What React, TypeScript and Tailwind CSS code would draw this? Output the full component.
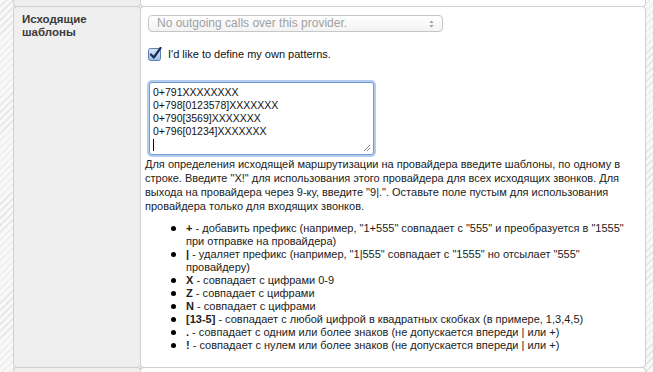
export default function App() {
  const items: { b: string; lines: string[] }[] = [
    { b: "+", lines: [' - добавить префикс (например, "1+555" совпадает с "555" и преобразуется в "1555"', "при отправке на провайдера)"] },
    { b: "|", lines: [' - удаляет префикс (например, "1|555" совпадает с "1555" но отсылает "555"', "провайдеру)"] },
    { b: "X", lines: [" - совпадает с цифрами 0-9"] },
    { b: "Z", lines: [" - совпадает с цифрами"] },
    { b: "N", lines: [" - совпадает с цифрами"] },
    { b: "[13-5]", lines: [" - совпадает с любой цифрой в квадратных скобках (в примере, 1,3,4,5)"] },
    { b: ".", lines: [" - совпадает с одним или более знаков (не допускается впереди | или +)"] },
    { b: "!", lines: [" - совпадает с нулем или более знаков (не допускается впереди | или +)"] },
  ];
  return (
    <div className="w-[653px] h-[372px] overflow-hidden bg-[repeating-linear-gradient(135deg,#f8f8f8_0px,#f8f8f8_4px,#e4e4e4_4px,#e4e4e4_5px)] pl-[13px] pr-[7px] text-[#222] font-['Liberation_Sans',Arial,sans-serif]">
      {/* previous row */}
      <div className="flex h-[7px]">
        <div className="w-[128px] shrink-0 bg-[#efefef] border-x border-b border-[#d0d0d0] rounded-b-[4px]" />
        <div className="flex-1 -ml-px bg-white border-x border-b border-[#d0d0d0] rounded-b-[4px]" />
      </div>
      {/* main row */}
      <div className="flex -mt-px h-[362px]">
        <div className="w-[128px] shrink-0 bg-[#efefef] border border-[#d0d0d0] rounded-[4px] pl-[8px] pt-[6px]">
          <div className="font-bold text-[11.5px] leading-[13px] text-[#3a3a3a]">
            Исходящие
            <br />
            шаблоны
          </div>
        </div>
        <div className="flex-1 -ml-px bg-white border border-[#d0d0d0] rounded-[4px] pl-[4px] pt-[8px]">
          {/* select */}
          <div className="relative ml-[3px] w-[295px] h-[17px] rounded-[4px] border border-[#c6c6c6] bg-[linear-gradient(#ffffff,#f3f3f3)] pl-[8px] text-[12px] leading-[15px] text-[#a0a0a0]">
            No outgoing calls over this provider.
            <svg className="absolute right-[8px] top-[4px]" width="5" height="8" viewBox="0 0 5 8">
              <path d="M0.5 3 L2.5 0.5 L4.5 3 Z" fill="#9a9a9a" />
              <path d="M0.5 5 L2.5 7.5 L4.5 5 Z" fill="#9a9a9a" />
            </svg>
          </div>
          {/* checkbox */}
          <div className="mt-[14px] ml-[3px] flex items-center h-[15px] gap-[6px]">
            <svg width="14" height="14" viewBox="0 0 14 14">
              <defs>
                <linearGradient id="cb" x1="0" y1="0" x2="0" y2="1">
                  <stop offset="0" stopColor="#dbe8f8" />
                  <stop offset="1" stopColor="#9fbfe6" />
                </linearGradient>
              </defs>
              <rect x="0.5" y="1.5" width="12" height="12" rx="2" fill="url(#cb)" stroke="#5d7fae" />
              <path d="M3 7.5 L5.8 10.5 L12.5 1" fill="none" stroke="#1c2c52" strokeWidth="2.2" strokeLinecap="round" strokeLinejoin="round" />
            </svg>
            <span className="text-[11px] leading-[14px] text-[#111]">I'd like to define my own patterns.</span>
          </div>
          {/* textarea */}
          <div className="relative mt-[21px] ml-[4px] w-[225px] h-[73px] rounded-[3px] border border-[#6f9ad4] shadow-[0_0_0_2px_#b3cbec] bg-white pl-[3px] pt-[3px] text-[10.5px] leading-[13px] text-[#111]">
            <div>0+791XXXXXXXX</div>
            <div>0+798[0123578]XXXXXXX</div>
            <div>0+790[3569]XXXXXXX</div>
            <div>0+796[01234]XXXXXXX</div>
            <div className="h-[13px] flex items-center">
              <span className="w-px h-[12px] bg-black" />
            </div>
            <svg className="absolute right-[2px] bottom-[2px]" width="8" height="8" viewBox="0 0 8 8">
              <path d="M7 1 L1 7 M7 4 L4 7" stroke="#888" strokeWidth="1" />
            </svg>
          </div>
          {/* paragraph */}
          <div className="mt-[2px] text-[11px] leading-[14px] whitespace-nowrap">
            <div>Для определения исходящей маршрутизации на провайдера введите шаблоны, по одному в</div>
            <div>строке. Введите "X!" для использования этого провайдера для всех исходящих звонков. Для</div>
            <div>выхода на провайдера через 9-ку, введите "9|.". Оставьте поле пустым для использования</div>
            <div>провайдера только для входящих звонков.</div>
          </div>
          {/* list */}
          <div className="mt-[9px] text-[11px] leading-[13px] whitespace-nowrap">
            {items.map((it, i) => (
              <div key={i} className="flex">
                <div className="w-[41px] shrink-0 h-[13px] flex items-center">
                  <span className="ml-[26px] w-[5px] h-[5px] rounded-full bg-black" />
                </div>
                <div>
                  {it.lines.map((l, j) => (
                    <div key={j}>
                      {j === 0 && <b className="font-bold">{it.b}</b>}
                      {l}
                    </div>
                  ))}
                </div>
              </div>
            ))}
          </div>
        </div>
      </div>
      {/* next row */}
      <div className="flex -mt-px h-[20px]">
        <div className="w-[128px] shrink-0 bg-[#efefef] border-x border-t border-[#d0d0d0] rounded-t-[4px]" />
        <div className="flex-1 -ml-px bg-white border-x border-t border-[#d0d0d0] rounded-t-[4px]" />
      </div>
    </div>
  );
}
